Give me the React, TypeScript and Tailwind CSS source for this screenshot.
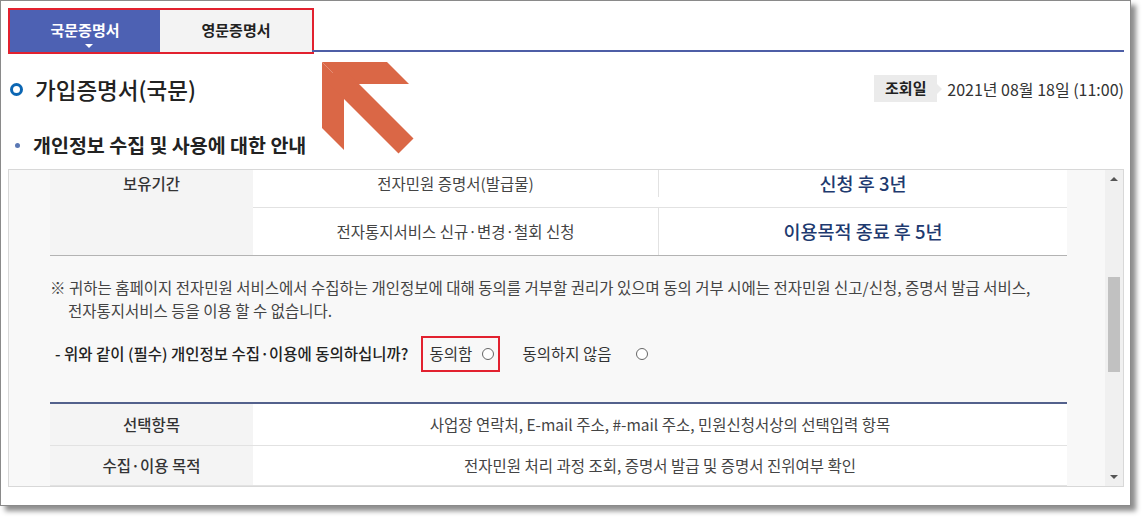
import React from 'react';

const FONT = "font-['Noto_Sans_CJK_KR','Noto_Sans',sans-serif]";

function Radio() {
  return <span className="inline-block w-[12px] h-[12px] rounded-full border border-[#666] bg-white" />;
}

function Arrow() {
  // annotation arrow drawn over the page
  return (
    <svg className="absolute left-[315px] top-[55px]" width="105" height="105" viewBox="0 0 105 105">
      <g fill="#da6746">
        <polygon points="6,6 71,6 93,28 28,28" />
        <polygon points="6,6 6,72 28,94 28,28" />
        <polygon points="24.5,9.5 97.5,82.5 82.5,97.5 9.5,24.5" />
      </g>
    </svg>
  );
}

function Scrollbar() {
  return (
    <div className="w-[18px] bg-[#f0f0f0] flex flex-col items-center">
      <div className="h-[18px] flex items-center justify-center">
        <span className="w-0 h-0 border-x-[4px] border-x-transparent border-b-[4px] border-b-[#555]" />
      </div>
      <div className="h-[89px]" />
      <div className="w-[12px] h-[95px] bg-[#c1c1c1]" />
      <div className="flex-1" />
      <div className="h-[18px] flex items-center justify-center">
        <span className="w-0 h-0 border-x-[4px] border-x-transparent border-t-[4px] border-t-[#555]" />
      </div>
    </div>
  );
}

export default function App() {
  return (
    <div className={`w-[1143px] h-[517px] bg-white ${FONT}`}>
      <div className="relative w-[1131px] h-[506px] bg-white border border-[#8a8a8a] shadow-[5px_5px_5px_rgba(0,0,0,0.45)] flex flex-col">
        {/* tabs */}
        <div className="flex mt-[9px] ml-[9px] mr-[6px] h-[42px]">
          <div className="flex outline-2 outline-[#e2212f]">
            <div className="relative w-[150px] bg-[#4d61b3] text-white text-[15px] font-bold flex items-center justify-center pb-[2px]">
              국문증명서
              <span className="absolute left-[79px] -translate-x-1/2 bottom-[4px] w-0 h-0 border-x-[4px] border-x-transparent border-t-[4px] border-t-white" />
            </div>
            <div className="w-[152px] bg-[#f3f3f3] text-[#222] text-[15px] font-bold flex items-center justify-center pb-[2px]">
              영문증명서
            </div>
          </div>
          <div className="flex-1 border-b-2 border-[#4d5ea6]" />
        </div>

        {/* title row */}
        <div className="flex justify-between items-start mt-[23px] mr-[6px]">
          <div className="flex items-center ml-[9px]">
            <span className="w-[13px] h-[13px] rounded-full border-[3px] border-[#0b66b3]" />
            <h1 className="ml-[12px] text-[22.5px] leading-[28px] font-medium text-[#222]">가입증명서(국문)</h1>
          </div>
          <div className="flex items-center">
            <div className="w-[63px] h-[27px] bg-[#ebebeb] text-[15px] font-bold text-[#222] flex items-center justify-center">조회일</div>
            <span className="w-0 h-0 border-y-[5px] border-y-transparent border-l-[5px] border-l-[#ebebeb]" />
            <span className="ml-[5px] text-[16px] text-[#333]">2021년 08월 18일 (11:00)</span>
          </div>
        </div>

        {/* subtitle */}
        <div className="flex items-center mt-[29px] ml-[14px]">
          <span className="w-[5px] h-[5px] rounded-full bg-[#5a78b4]" />
          <h2 className="ml-[13px] text-[19.5px] leading-[26px] font-bold text-[#222]">개인정보 수집 및 사용에 대한 안내</h2>
        </div>

        {/* scroll box */}
        <div className="mt-[11px] ml-[7px] w-[1116px] h-[318px] border border-[#d8d8d8] bg-[#f8f8f8] flex">
          <div className="flex-1 overflow-hidden pl-[41px] pr-[38px]">
            {/* table 1 */}
            <div className="flex border-b border-[#b3b3b3] text-[15.5px] text-[#444]">
              <div className="w-[203px] h-[85px] bg-[#f4f4f4] text-[#333] font-medium flex justify-center pt-[2px]">보유기간</div>
              <div className="flex-1 bg-white flex flex-col">
                <div className="h-[38px] flex border-b border-[#e2e2e2] pb-[10px]">
                  <div className="w-[406px] flex items-center justify-center border-r border-[#e2e2e2]">전자민원 증명서(발급물)</div>
                  <div className="flex-1 flex items-center justify-center text-[18.5px] font-medium text-[#1e3a6f]">신청 후 3년</div>
                </div>
                <div className="flex-1 flex">
                  <div className="w-[406px] flex items-center justify-center border-r border-[#e2e2e2]">전자통지서비스 신규·변경·철회 신청</div>
                  <div className="flex-1 flex items-center justify-center text-[18.5px] font-medium text-[#1e3a6f]">이용목적 종료 후 5년</div>
                </div>
              </div>
            </div>

            {/* note */}
            <p className="mt-[20px] pl-[18px] -indent-[18px] text-[15.5px] leading-[23px] text-[#444]">
              ※ 귀하는 홈페이지 전자민원 서비스에서 수집하는 개인정보에 대해 동의를 거부할 권리가 있으며 동의 거부 시에는 전자민원 신고/신청, 증명서 발급 서비스,
              <br />
              전자통지서비스 등을 이용 할 수 없습니다.
            </p>

            {/* question */}
            <div className="mt-[14px] flex items-center text-[15.5px] text-[#333]">
              <span className="ml-[5px] font-medium text-[#222]">- 위와 같이 (필수) 개인정보 수집·이용에 동의하십니까?</span>
              <label className="ml-[13px] h-[36px] w-[79px] border-2 border-[#e2212f] flex items-center pl-[6px] gap-[10px]">
                <span>동의함</span>
                <Radio />
              </label>
              <label className="ml-[22px] flex items-center gap-[24px]">
                <span>동의하지 않음</span>
                <Radio />
              </label>
            </div>

            {/* table 2 */}
            <div className="mt-[30px] border-t-2 border-[#53618c] text-[15.5px] text-[#444]">
              <div className="flex h-[42px] border-b border-[#e2e2e2]">
                <div className="w-[203px] bg-[#f4f4f4] text-[#333] font-medium flex items-center justify-center">선택항목</div>
                <div className="flex-1 bg-white flex items-center justify-center">사업장 연락처, E-mail 주소, #-mail 주소, 민원신청서상의 선택입력 항목</div>
              </div>
              <div className="flex h-[40px] border-b border-[#e2e2e2]">
                <div className="w-[203px] bg-[#f4f4f4] text-[#333] font-medium flex items-center justify-center">수집·이용 목적</div>
                <div className="flex-1 bg-white flex items-center justify-center">전자민원 처리 과정 조회, 증명서 발급 및 증명서 진위여부 확인</div>
              </div>
            </div>
          </div>
          <Scrollbar />
        </div>

        <Arrow />
      </div>
    </div>
  );
}
